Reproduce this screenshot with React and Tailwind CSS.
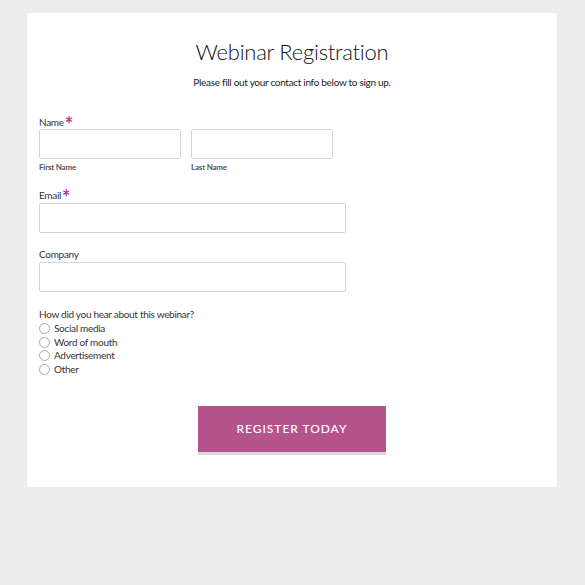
import React from "react";

const font = { fontFamily: "Lato, 'Open Sans', sans-serif" };

function Star() {
  return <span className="text-[#b83a95] text-[20px] leading-[10px] h-[10px] relative top-[3px] ml-[1px] font-bold">*</span>;
}

function Radio({ label }) {
  return (
    <label className="flex items-center h-[13.5px] text-[10px] tracking-[-0.3px] text-[#333]">
      <span className="w-[11px] h-[11px] rounded-full border border-[#a9a9a9] bg-white mr-[4px] shrink-0" />
      {label}
    </label>
  );
}

export default function App() {
  return (
    <div className="w-[585px] h-[585px] bg-[#ededed] pt-[13px] pl-[27px]" style={font}>
      <div className="w-[530px] h-[474px] bg-white rounded-[3px] pt-[36px] px-[12px]">
        <h1 className="text-center text-[22px] tracking-[-0.25px] leading-[29px] font-light text-[#111] -mt-[12px]">Webinar Registration</h1>
        <p className="text-center text-[10px] tracking-[-0.3px] leading-[13px] text-[#222] mt-[10px]">Please fill out your contact info below to sign up.</p>

        <div className="mt-[27px] text-[10px] tracking-[-0.3px] leading-[13px] text-[#333] flex items-start">Name<Star /></div>
        <div className="flex gap-[10px] mt-[0px]">
          <div className="w-[142px]">
            <div className="h-[30px] border border-[#d4d4d4] rounded-[2px]" />
            <div className="text-[8px] tracking-[-0.2px] font-bold text-[#555] mt-[3px] leading-[10px]">First Name</div>
          </div>
          <div className="w-[142px]">
            <div className="h-[30px] border border-[#d4d4d4] rounded-[2px]" />
            <div className="text-[8px] tracking-[-0.2px] font-bold text-[#555] mt-[3px] leading-[10px]">Last Name</div>
          </div>
        </div>

        <div className="mt-[17px] text-[10px] tracking-[-0.3px] leading-[13px] text-[#333] flex items-start">Email<Star /></div>
        <div className="mt-[1px] w-[307px] h-[30px] border border-[#d4d4d4] rounded-[2px]" />

        <div className="mt-[15px] text-[10px] tracking-[-0.3px] leading-[13px] text-[#333]">Company</div>
        <div className="mt-[1px] w-[307px] h-[30px] border border-[#d4d4d4] rounded-[2px]" />

        <div className="mt-[16px] text-[10px] tracking-[-0.3px] leading-[13px] text-[#333]">How did you hear about this webinar?</div>
        <div className="mt-[1px] flex flex-col">
          <Radio label="Social media" />
          <Radio label="Word of mouth" />
          <Radio label="Advertisement" />
          <Radio label="Other" />
        </div>

        <div className="flex justify-center mt-[30px]">
          <button className="w-[188px] h-[49px] bg-[#b5538f] border-b-[3px] border-[#d9d9d9] text-white text-[12px] tracking-[0.08em] font-medium uppercase">
            Register Today
          </button>
        </div>
      </div>
    </div>
  );
}
